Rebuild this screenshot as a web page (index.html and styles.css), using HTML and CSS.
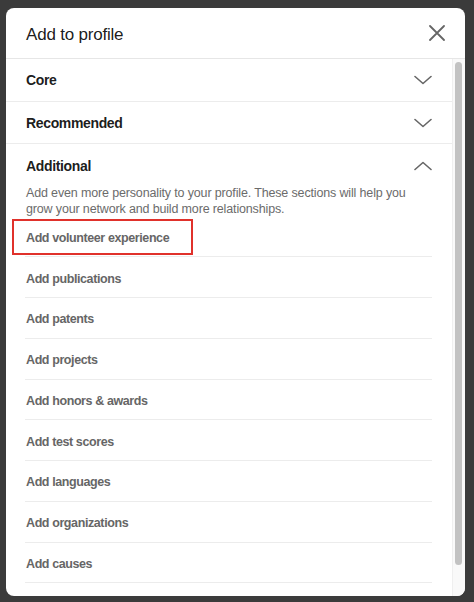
FILE: index.html
```html
<!DOCTYPE html>
<html>
<head>
<meta charset="utf-8">
<link rel="stylesheet" href="styles.css">
</head>
<body>
<div class="backdrop">
  <div class="modal">
    <div class="modal-header">
      <h2 class="modal-title">Add to profile</h2>
      <svg class="close-icon" width="16" height="16" viewBox="0 0 16 16"><path d="M1 1L15 15M15 1L1 15" stroke="#666" stroke-width="1.8" fill="none" stroke-linecap="round"/></svg>
    </div>
    <div class="modal-body">
      <div class="modal-content">
        <div class="section-row">
          <span class="section-title">Core</span>
          <svg class="chevron" width="18" height="10" viewBox="0 0 18 10"><path d="M1 1.5L9 8.5L17 1.5" stroke="#666" stroke-width="1.6" fill="none" stroke-linecap="round" stroke-linejoin="round"/></svg>
        </div>
        <div class="section-row">
          <span class="section-title">Recommended</span>
          <svg class="chevron" width="18" height="10" viewBox="0 0 18 10"><path d="M1 1.5L9 8.5L17 1.5" stroke="#666" stroke-width="1.6" fill="none" stroke-linecap="round" stroke-linejoin="round"/></svg>
        </div>
        <div class="section-open">
          <div class="section-row no-border">
            <span class="section-title">Additional</span>
            <svg class="chevron" width="18" height="10" viewBox="0 0 18 10"><path d="M1 8.5L9 1.5L17 8.5" stroke="#666" stroke-width="1.6" fill="none" stroke-linecap="round" stroke-linejoin="round"/></svg>
          </div>
          <p class="section-desc">Add even more personality to your profile. These sections will help you grow your network and build more relationships.</p>
          <ul class="item-list">
            <li class="item highlighted">Add volunteer experience</li>
            <li class="item">Add publications</li>
            <li class="item">Add patents</li>
            <li class="item">Add projects</li>
            <li class="item">Add honors &amp; awards</li>
            <li class="item">Add test scores</li>
            <li class="item">Add languages</li>
            <li class="item">Add organizations</li>
            <li class="item">Add causes</li>
          </ul>
        </div>
      </div>
      <div class="scrollbar"><div class="scroll-thumb"></div></div>
    </div>
  </div>
</div>
</body>
</html>
```

FILE: styles.css
```css
*, *::before, *::after { box-sizing: border-box; }
html, body { margin: 0; padding: 0; }
body {
  background: #3b3b3b;
  font-family: "Liberation Sans", Arial, sans-serif;
  width: 474px;
  height: 602px;
  overflow: hidden;
}
.backdrop {
  padding: 8px 9px 6px 6px;
  height: 602px;
}
.modal {
  background: #fff;
  border-radius: 8px;
  height: 588px;
  display: flex;
  flex-direction: column;
  overflow: hidden;
}
.modal-header {
  height: 51px;
  flex: none;
  display: flex;
  align-items: center;
  justify-content: space-between;
  padding: 0 20px 0 20px;
  border-bottom: 1px solid #e6e6e6;
}
.modal-title {
  margin: 0;
  font-size: 17px;
  font-weight: 400;
  letter-spacing: -0.2px;
  color: rgba(0,0,0,0.9);
  padding-top: 3px;
}
.close-icon { display: block; }
.modal-body {
  flex: 1;
  display: flex;
  min-height: 0;
}
.modal-content {
  flex: 1;
  overflow: hidden;
}
.scrollbar {
  width: 13px;
  flex: none;
  background: #f9f9f9;
  border-left: 1px solid #efefef;
  padding: 3px 2px 0 2px;
}
.scroll-thumb {
  width: 7px;
  height: 503px;
  background: #c2c2c2;
  border-radius: 4px;
}
.section-row {
  height: 42.5px;
  display: flex;
  align-items: center;
  justify-content: space-between;
  padding: 1px 20px 0 20px;
  border-bottom: 1px solid #ececec;
}
.section-row.no-border { border-bottom: none; }
.section-title {
  font-size: 14px;
  font-weight: 700;
  letter-spacing: -0.35px;
  color: rgba(0,0,0,0.9);
}
.chevron { display: block; }
.section-desc {
  margin: -2px 0 0 0;
  padding: 0 20px;
  font-size: 12.5px;
  line-height: 16px;
  letter-spacing: -0.15px;
  color: #6b6b6b;
}
.item-list {
  list-style: none;
  margin: 0 20px 0 19px;
  padding: 0;
}
.item {
  height: 40.75px;
  display: flex;
  align-items: center;
  padding: 3px 0 0 1px;
  border-bottom: 1px solid #ececec;
  font-size: 12.5px;
  font-weight: 700;
  letter-spacing: -0.4px;
  color: #666;
  position: relative;
}
.item.highlighted::after {
  content: "";
  position: absolute;
  left: -13px;
  top: 2px;
  width: 181px;
  height: 36px;
  border: 2px solid #e0312b;
}
```
